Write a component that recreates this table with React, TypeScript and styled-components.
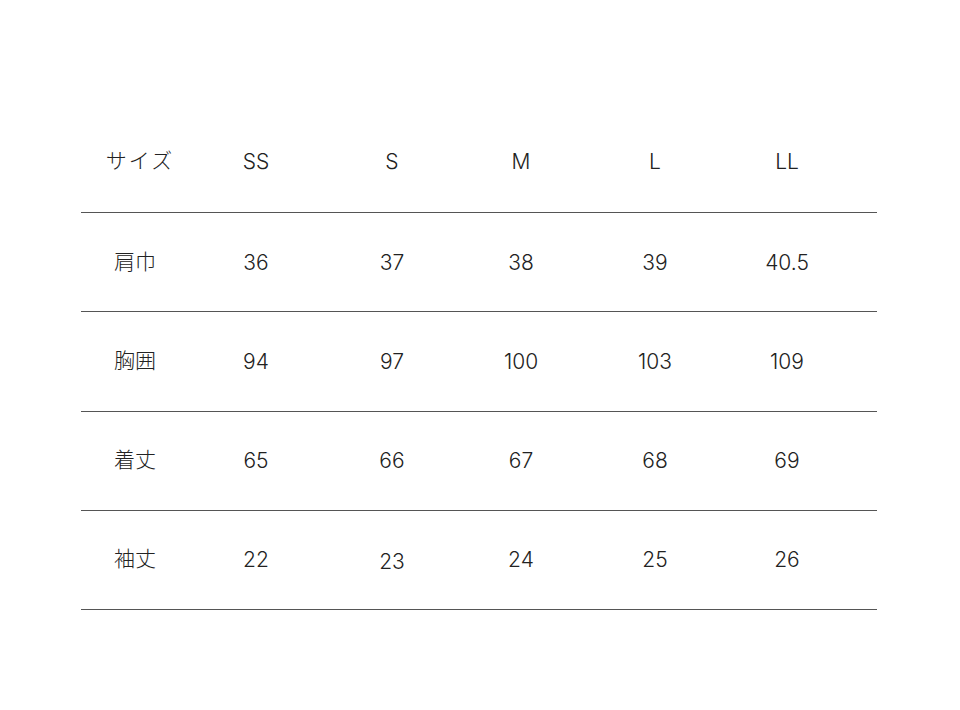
import React from "react";
import styled, { createGlobalStyle } from "styled-components";

const GlobalStyle = createGlobalStyle`
  body {
    margin: 0;
    background: #ffffff;
    font-family: Inter, "Noto Sans CJK JP", sans-serif;
    color: #1e1e1e;
  }
`;

const headers = ["サイズ", "SS", "S", "M", "L", "LL"];

const rows: { label: string; values: string[]; lower?: number }[] = [
  { label: "肩巾", values: ["36", "37", "38", "39", "40.5"] },
  { label: "胸囲", values: ["94", "97", "100", "103", "109"] },
  { label: "着丈", values: ["65", "66", "67", "68", "69"] },
  { label: "袖丈", values: ["22", "23", "24", "25", "26"], lower: 1 },
];

const App = () => {
  return (
    <Page>
      <GlobalStyle />
      <Table>
        <HeaderRow>
          {headers.map((h, i) => (
            <Cell key={h} $label={i === 0} $wide={i === 0}>
              {h}
            </Cell>
          ))}
        </HeaderRow>
        {rows.map((r) => (
          <Row key={r.label}>
            <Cell $label>{r.label}</Cell>
            {r.values.map((v, i) => (
              <Cell key={i} $shift={r.lower === i ? 3 : 0}>
                {v}
              </Cell>
            ))}
          </Row>
        ))}
      </Table>
    </Page>
  );
};

const Page = styled.div`
  padding: 112px 0 0 81px;
  width: 960px;
  height: 710px;
  box-sizing: border-box;
`;

const Table = styled.div`
  width: 796px;
  display: flex;
  flex-direction: column;
`;

const Row = styled.div`
  display: grid;
  grid-template-columns: 108px 134px 138px 120px 148px 116px 1fr;
  align-items: center;
  height: 99.25px;
  box-sizing: border-box;
  border-bottom: 1px solid #555555;
`;

const HeaderRow = styled(Row)`
  height: 101px;
  padding-bottom: 1px;
`;

const Cell = styled.div<{ $label?: boolean; $shift?: number; $wide?: boolean }>`
  text-align: center;
  font-size: 21px;
  line-height: 1;
  padding-top: ${(p) => p.$shift || 0}px;
  padding-bottom: ${(p) => (p.$label ? 4 : 0)}px;
  padding-left: ${(p) => (p.$wide ? 10 : 0)}px;
  letter-spacing: ${(p) => (p.$wide ? "2px" : "0")};
  font-family: ${(p) =>
    p.$label ? `"Noto Sans CJK JP", sans-serif` : `Inter, "Noto Sans CJK JP", sans-serif`};
  font-weight: 300;
  color: #222222;
`;

export default App;
